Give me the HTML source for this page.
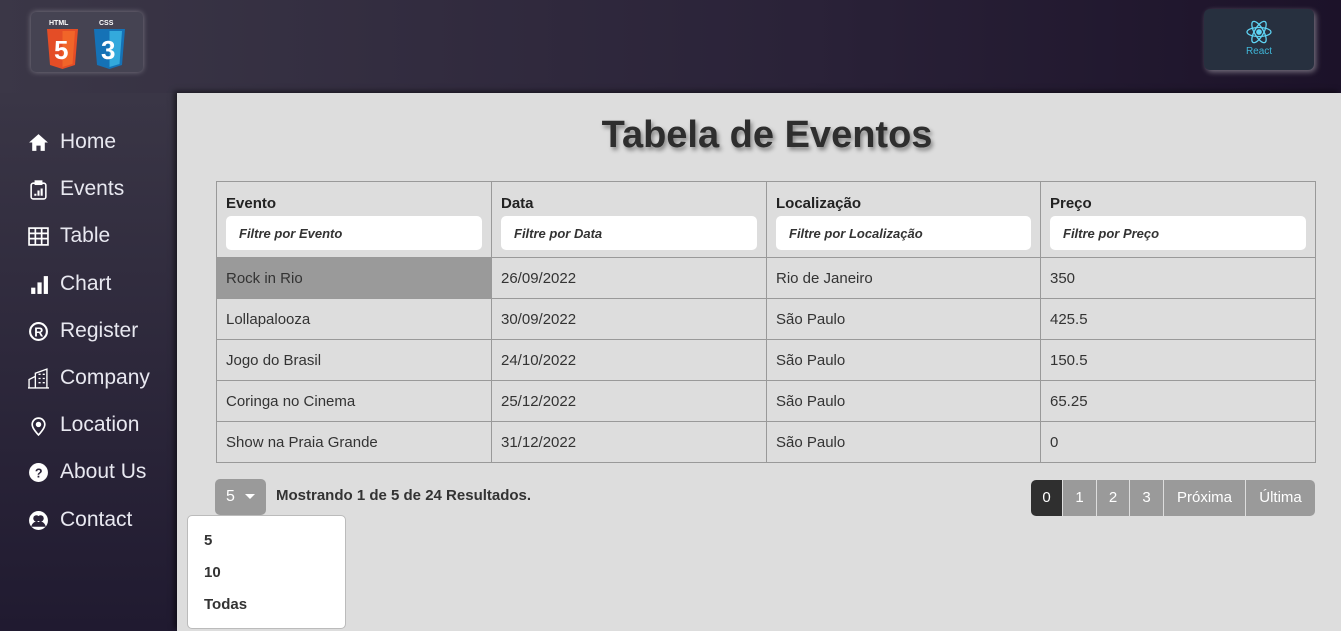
<!DOCTYPE html>
<html><head><meta charset="utf-8"><style>
*{margin:0;padding:0;box-sizing:border-box}
body{width:1341px;height:631px;overflow:hidden;font-family:"Liberation Sans",sans-serif;background:linear-gradient(90deg,#3b3747 0%,#2a2238 60%,#1c1229 100%);position:relative}
.side{position:absolute;left:0;top:93px;width:177px;height:538px;background:linear-gradient(180deg,#3a3646,#201a30)}
.logo{position:absolute;left:31px;top:12px;width:112px;height:60px;background:#454352;border-radius:5px;box-shadow:0 0 6px rgba(255,255,255,.35)}
.react{position:absolute;left:1204px;top:9px;width:110px;height:61px;background:#27303f;border-radius:6px;box-shadow:2px 2px 6px rgba(255,255,255,.4)}
.main{position:absolute;left:177px;top:93px;width:1164px;height:538px;background:#dddddd;box-shadow:-3px -2px 5px rgba(0,0,0,.5)}
.nav{position:absolute;left:28px;color:#e8e8f0;font-size:21px;display:flex;align-items:center}
.nav svg{width:21px;height:21px;margin-right:11px}
h1{position:absolute;top:114px;font-size:38px;color:#2e2e2e;text-align:center;text-shadow:2px 3px 4px rgba(0,0,0,.4)}
table{position:absolute;left:216px;top:181px;width:1100px;border-collapse:collapse;font-size:15px;color:#333}
td,th{border:1px solid #999;padding:0 9px;text-align:left}
th{height:76px;vertical-align:top;padding-top:13px;font-size:15px;color:#222}
th div{margin-top:4px;background:#fff;border-radius:5px;height:34px;font-style:italic;font-size:13px;padding:10px 13px;color:#333}
td{height:41px}
.pg{position:absolute;top:480px;display:flex;height:36px}
.pg span{background:#9a9a9a;color:#fff;font-size:15px;line-height:36px;text-align:center;border-left:1px solid #ddd}
</style></head><body>
<div class="logo">
<svg style="position:absolute;left:15px;top:5px" width="33" height="52" viewBox="0 0 33 52"><text x="3" y="8" font-size="7" font-weight="bold" fill="#fff" font-family="Liberation Sans">HTML</text><path d="M1 12h31l-3 36-12.5 4-12.5-4z" fill="#e44d26"/><path d="M16.5 14v36l10-3 2.5-33z" fill="#f16529"/><text x="8" y="42" font-size="26" font-weight="bold" fill="#fff" font-family="Liberation Sans">5</text></svg>
<svg style="position:absolute;left:62px;top:5px" width="33" height="52" viewBox="0 0 33 52"><text x="6" y="8" font-size="7" font-weight="bold" fill="#fff" font-family="Liberation Sans">CSS</text><path d="M1 12h31l-3 36-12.5 4-12.5-4z" fill="#1572b6"/><path d="M16.5 14v36l10-3 2.5-33z" fill="#33a9dc"/><text x="8" y="42" font-size="26" font-weight="bold" fill="#fff" font-family="Liberation Sans">3</text></svg>
</div>
<div class="react"><svg style="position:absolute;left:41px;top:11px" width="28" height="24" viewBox="-14 -12 28 24" fill="none" stroke="#5ed3f3" stroke-width="1.3"><ellipse rx="12" ry="4.5"/><ellipse rx="12" ry="4.5" transform="rotate(60)"/><ellipse rx="12" ry="4.5" transform="rotate(120)"/><circle r="2.2" fill="#5ed3f3"/></svg><div style="position:absolute;top:37px;width:100%;text-align:center;color:#3fb6d8;font-size:10px">React</div></div>
<div class="side"></div>
<div class="main"></div>
<div class="nav" style="top:130px"><svg viewBox="0 0 20 20"><path d="M10 2 1 10h3v8h4v-5h4v5h4v-8h3z" fill="#fff"/></svg>Home</div>
<div class="nav" style="top:177px"><svg viewBox="0 0 20 20" fill="none" stroke="#fff" stroke-width="1.5"><rect x="3" y="4" width="14" height="15" rx="2"/><rect x="7" y="2" width="6" height="3" fill="#fff"/><path d="M7 16v-2M10 16v-5M13 16v-7" stroke-width="2"/></svg>Events</div>
<div class="nav" style="top:224px"><svg viewBox="0 0 20 20" fill="none" stroke="#fff" stroke-width="1.6"><rect x="1" y="2" width="18" height="16"/><path d="M1 7h18M1 12h18M7 2v16M13 2v16"/></svg>Table</div>
<div class="nav" style="top:272px"><svg viewBox="0 0 20 20" fill="#fff"><rect x="3" y="13" width="4" height="6"/><rect x="9" y="8" width="4" height="11"/><rect x="15" y="2" width="4" height="17"/></svg>Chart</div>
<div class="nav" style="top:319px"><svg viewBox="0 0 20 20"><circle cx="10" cy="10" r="8" fill="none" stroke="#fff" stroke-width="2"/><text x="6" y="15" font-size="12" font-weight="bold" fill="#fff" font-family="Liberation Sans">R</text></svg>Register</div>
<div class="nav" style="top:366px"><svg viewBox="0 0 20 20" fill="none" stroke="#fff" stroke-width="1.3"><path d="M1 19V11l6-3v11M7 19V5l11-4v18zM0 19h20"/><path d="M10 6h2M14 6h2M10 10h2M14 10h2M10 14h2M14 14h2"/></svg>Company</div>
<div class="nav" style="top:413px"><svg viewBox="0 0 20 20" fill="none" stroke="#fff" stroke-width="1.6"><path d="M10 19s-6-6-6-10a6 6 0 0 1 12 0c0 4-6 10-6 10z"/><circle cx="10" cy="9" r="1.8" fill="#fff"/></svg>Location</div>
<div class="nav" style="top:460px"><svg viewBox="0 0 20 20"><circle cx="10" cy="10" r="9" fill="#fff"/><text x="6.5" y="15" font-size="12" font-weight="bold" fill="#2a2338" font-family="Liberation Sans">?</text></svg>About Us</div>
<div class="nav" style="top:508px"><svg viewBox="0 0 20 20"><circle cx="10" cy="10" r="9" fill="#fff"/><circle cx="8" cy="8" r="3" fill="#2a2338"/><circle cx="12" cy="8" r="3" fill="#2a2338"/><path d="M3 16c1-4 4-5 5-5s4 1 5 5M7 16c1-4 4-5 5-5s4 1 5 5" fill="#2a2338"/></svg>Contact</div>
<h1 style="left:177px;width:1180px">Tabela de Eventos</h1>
<table>
<tr><th style="width:275px">Evento<div>Filtre por Evento</div></th><th style="width:275px">Data<div>Filtre por Data</div></th><th style="width:274px">Localização<div>Filtre por Localização</div></th><th>Preço<div>Filtre por Preço</div></th></tr>
<tr><td style="background:#9a9a9a">Rock in Rio</td><td>26/09/2022</td><td>Rio de Janeiro</td><td>350</td></tr>
<tr><td>Lollapalooza</td><td>30/09/2022</td><td>São Paulo</td><td>425.5</td></tr>
<tr><td>Jogo do Brasil</td><td>24/10/2022</td><td>São Paulo</td><td>150.5</td></tr>
<tr><td>Coringa no Cinema</td><td>25/12/2022</td><td>São Paulo</td><td>65.25</td></tr>
<tr><td>Show na Praia Grande</td><td>31/12/2022</td><td>São Paulo</td><td>0</td></tr>
</table>
<div style="position:absolute;left:215px;top:479px;width:51px;height:36px;background:#9a9a9a;border-radius:5px;color:#fff;font-size:16px;line-height:36px;padding-left:11px">5 <span style="display:inline-block;border:5px solid transparent;border-top-color:#fff;border-bottom:0;vertical-align:middle;margin-left:6px"></span></div>
<div style="position:absolute;left:276px;top:487px;font-size:15px;font-weight:bold;color:#333">Mostrando 1 de 5 de 24 Resultados.</div>
<div style="position:absolute;left:187px;top:515px;width:159px;height:114px;background:#fff;border:1px solid #bbb;border-radius:5px;font-size:15px;font-weight:bold;color:#333">
<div style="position:absolute;left:16px;top:16px">5</div><div style="position:absolute;left:16px;top:48px">10</div><div style="position:absolute;left:16px;top:80px">Todas</div></div>
<div class="pg" style="left:1031px"><span style="background:#2f2f2f;border:0;border-radius:5px 0 0 5px;width:31px">0</span><span style="width:34px">1</span><span style="width:33px">2</span><span style="width:34px">3</span><span style="width:82px">Próxima</span><span style="width:70px;border-radius:0 5px 5px 0">Última</span></div>
</body></html>
